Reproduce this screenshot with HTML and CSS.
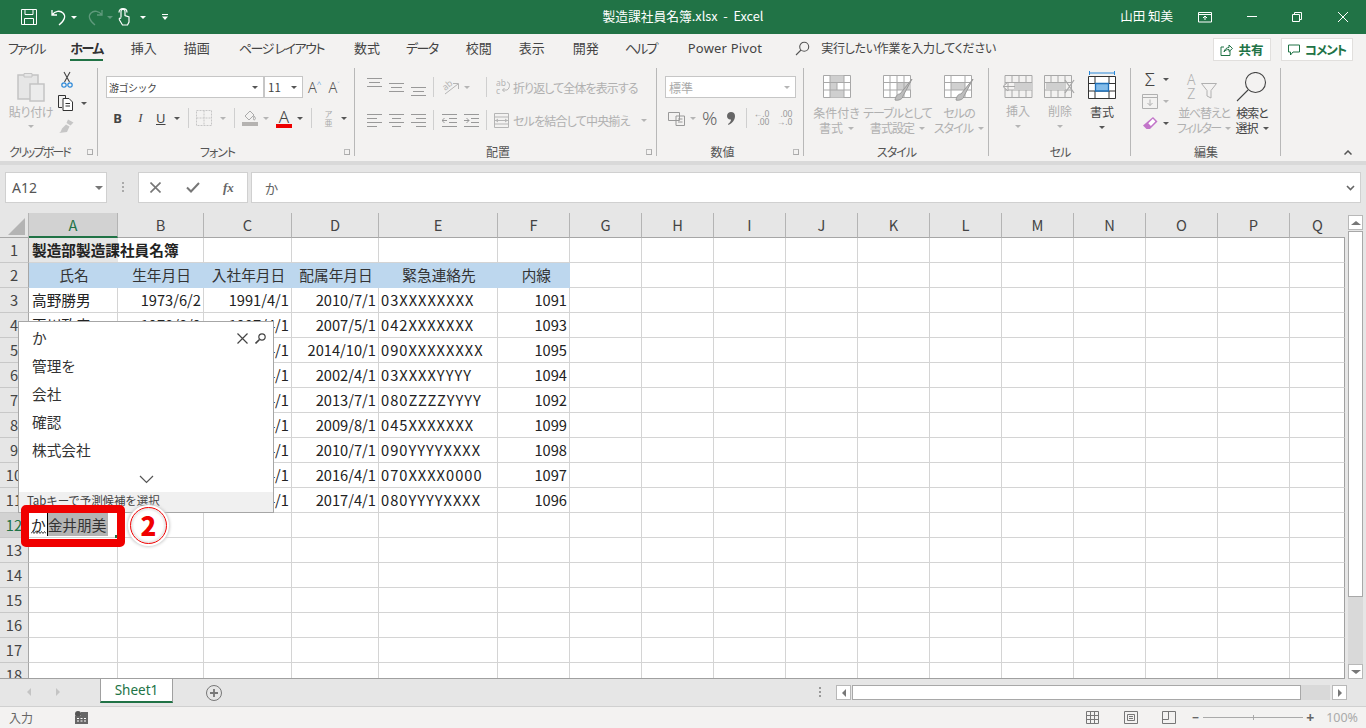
FILE: index.html
```html
<!DOCTYPE html>
<html lang="ja">
<head>
<meta charset="utf-8">
<title>製造課社員名簿.xlsx - Excel</title>
<link rel="stylesheet" href="styles.css">
</head>
<body>
<header class="titlebar">
  <div class="qat">
    <svg class="q-save" width="18" height="18" viewBox="0 0 18 18" fill="none" stroke="#fff"><path d="M1.5 1.5h15v15h-15z M5 1.5v5h8v-5 M4.500 16.500v-6h9v6"/></svg>
    <svg class="q-undo" width="16" height="18" viewBox="0 0 16 18" fill="none" stroke="#fff" stroke-width="1.300"><path d="M1 2v5h5 M1 7c3-4 8-5 11-2s2 7-4 12"/></svg>
    <i class="tri tri-w"></i>
    <svg class="q-redo" width="16" height="18" viewBox="0 0 16 18" fill="none" stroke="#5f9a7c" stroke-width="1.300"><path d="M15 2v5h-5 M15 7c-3-4-8-5-11-2s-2 7 4 12"/></svg>
    <i class="tri tri-g"></i>
    <svg class="q-touch" width="13" height="18" viewBox="0 0 13 18" fill="none" stroke="#fff" stroke-width="1.200"><path d="M3 9.500V3.500a2 2 0 0 1 4 0v4l4 1.500v5l-1.500 3h-5L1.500 12c-.8-1.500.5-2.500 1.500-1.500 M1 4.500C1 2 2.500.7 5 .7s4 1.300 4 3.800"/></svg>
    <i class="tri tri-w"></i>
    <svg class="q-more" width="6" height="6" viewBox="0 0 6 6"><path d="M0 0h6v1H0z M0 2.500h6L3 6z" fill="#fff"/></svg>
  </div>
  <div class="doc-title">製造課社員名簿.xlsx&nbsp; - &nbsp;Excel</div>
  <div class="win">
    <span class="user">山田 知美</span>
    <svg class="w-disp" width="14" height="12" viewBox="0 0 14 12" fill="none" stroke="#fff"><path d="M.5 1.500h13v9.500H.5z M.5 3.500h13 M7 9V5 M5 7l2-2 2 2"/></svg>
    <svg class="w-min" width="10" height="2" viewBox="0 0 10 2"><path d="M0 .5h10" stroke="#fff"/></svg>
    <svg class="w-rest" width="10" height="10" viewBox="0 0 10 10" fill="none" stroke="#fff"><path d="M.5 2.500h7v7h-7z M2.500 2.500v-2h7v7h-2"/></svg>
    <svg class="w-close" width="10" height="10" viewBox="0 0 10 10" stroke="#fff"><path d="M0 0l10 10 M10 0L0 10"/></svg>
  </div>
</header>

<nav class="tabs">
  <span class="tab t-file">ファイル</span>
  <span class="tab tab-on">ホーム</span>
  <span class="tab t-ins">挿入</span>
  <span class="tab">描画</span>
  <span class="tab t-page">ページ レイアウト</span>
  <span class="tab t-num">数式</span>
  <span class="tab t-data">データ</span>
  <span class="tab t-rev">校閲</span>
  <span class="tab">表示</span>
  <span class="tab t-dev">開発</span>
  <span class="tab t-help">ヘルプ</span>
  <span class="tab tab-pp">Power Pivot</span>
  <span class="tell">
    <svg width="15" height="15" viewBox="0 0 15 15" fill="none" stroke="#555" stroke-width="1.100"><circle cx="9.200" cy="5.800" r="4.500"/><path d="M6 9L1 14"/></svg>
    実行したい作業を入力してください
  </span>
  <span class="tab-btns">
    <span class="tbtn tbtn-share"><svg width="13" height="13" viewBox="0 0 13 13" fill="none" stroke="#217346"><path d="M10 7.500v5H1V4h3 M4 9c.5-3 3-4.500 5-4.500V2l3.500 3.500L9 8.500V6.500C7 6.500 5 7 4 9z"/></svg>共有</span>
    <span class="tbtn tbtn-comm"><svg width="12" height="12" viewBox="0 0 12 12" fill="none" stroke="#217346"><path d="M.5 1h11v7H5L2.500 11V8h-2z"/></svg><span class="comm-t">コメント</span></span>
  </span>
</nav>

<section class="ribbon">
  <div class="grp g-clip">
    <div class="grp-body clip-body">
      <div class="big off paste">
        <svg width="29" height="31" viewBox="0 0 29 31" fill="none" stroke="#c4c4c4"><path d="M1 4h20v24H1z" fill="#e6e6e6" stroke-width="1.500"/><path d="M7 2.500h8v3.500H7z" fill="#e6e6e6"/><path d="M13 13h14v17H13z" fill="#ececec" stroke-width="1.500"/></svg>
        <span class="blabel">貼り付け</span>
        <i class="tri tri-l"></i>
      </div>
      <div class="clip-side">
        <svg width="12" height="17" viewBox="0 0 12 17" fill="none"><path d="M3 1l5.500 10 M9 1L3.500 11" stroke="#444" stroke-width="1.100"/><circle cx="3" cy="14" r="2.200" stroke="#2b88d8" stroke-width="1.200"/><circle cx="9" cy="14" r="2.200" stroke="#2b88d8" stroke-width="1.200"/></svg>
        <span class="row-ic"><svg width="19" height="16" viewBox="0 0 19 16" fill="none" stroke="#333"><path d="M4 12.500H.5v-12h7v2.500"/><path d="M5 3.500h6l3.500 3.500v8.500H5z M7.500 8.500h4.500 M7.500 11h4.500" fill="#fff"/></svg><i class="tri tri-d"></i></span>
        <svg width="17" height="16" viewBox="0 0 17 16" fill="#c6c6c6"><path d="M10 1.500l5.500 3-3 3-4-2.500z M8 6.500l3.500 2-2.500 5.500-8 1c2-1 2-2 3-4.500z"/></svg>
      </div>
    </div>
    <div class="grp-label">クリップボード<i class="launch"></i></div>
  </div>

  <div class="grp g-font">
    <div class="grp-body font-body">
      <div class="font-row">
        <span class="combo c-font">游ゴシック<i class="tri tri-d"></i></span>
        <span class="combo c-size">11<i class="tri tri-d"></i></span>
        <span class="ab grow">A<sup>^</sup></span>
        <span class="ab shrink">A<sup>˅</sup></span>
      </div>
      <div class="font-row fr2">
        <b class="fm fm-b">B</b>
        <em class="fm fm-i">I</em>
        <u class="fm fm-u">U</u>
        <i class="tri tri-d t-u"></i>
        <i class="vsep s1"></i>
        <svg class="bd" width="20" height="17" viewBox="0 0 20 17" fill="none" stroke="#c6c6c6" stroke-dasharray="2 1"><path d="M.5.500h15v15H.5z M8 .5v15 M.5 8h15"/></svg>
        <i class="tri tri-l t-bd"></i>
        <i class="vsep s2"></i>
        <span class="fill"><svg width="16" height="12" viewBox="0 0 16 12" fill="none" stroke="#aaa"><path d="M3 6l5-5 4 4-5 5z M12 6c1 1 2 2.500 1 3.500s-2 0-1.500-1z"/></svg><i class="bar bar-g"></i></span>
        <i class="tri tri-l t-fill"></i>
        <span class="fc">A<i class="bar bar-r"></i></span>
        <i class="tri tri-d t-fc"></i>
        <i class="vsep s3"></i>
        <span class="furi">ア<br><span>亜</span></span>
        <i class="tri tri-d t-fu"></i>
      </div>
    </div>
    <div class="grp-label">フォント<i class="launch"></i></div>
  </div>

  <div class="grp g-align">
    <div class="grp-body al-body">
      <div class="al-row">
        <svg class="lines va-t" width="15" height="9" viewBox="0 0 15 9" stroke="#999"><path d="M0 .5h15M2 4.500h11M0 8.500h15"/></svg>
        <svg class="lines va-m" width="15" height="9" viewBox="0 0 15 9" stroke="#999"><path d="M0 .5h15M2 4.500h11M0 8.500h15"/></svg>
        <svg class="lines va-b" width="15" height="9" viewBox="0 0 15 9" stroke="#999"><path d="M0 .5h15M2 4.500h11M0 8.500h15"/></svg>
        <i class="vsep"></i>
        <svg class="orient" width="18" height="18" viewBox="0 0 18 18" fill="none" stroke="#b5b5b5"><text x="1" y="11" font-size="9" fill="#b5b5b5" stroke="none" transform="rotate(-40 5 9)" font-family="Noto Sans">ab</text><path d="M3 16L16 6 M11 5.500h5.500V11"/></svg>
        <i class="tri tri-l t-or"></i>
        <i class="vsep s-wrap"></i>
        <svg width="15" height="16" viewBox="0 0 15 16" fill="none" stroke="#b5b5b5"><text x="0" y="7" font-size="8.500" fill="#b5b5b5" stroke="none" font-family="Noto Sans">ab</text><text x="0" y="15" font-size="8.500" fill="#b5b5b5" stroke="none" font-family="Noto Sans">c</text><path d="M11 3c3 0 3.500 6 0 8H6.500 M8.500 9l-2 2 2 2"/></svg>
        <span class="lbl-off wrap-t">折り返して全体を表示する</span>
      </div>
      <div class="al-row al-r2">
        <svg class="lines" width="15" height="13" viewBox="0 0 15 13" stroke="#999"><path d="M0 .5h15M0 4.500h10M0 8.500h15M0 12.500h10"/></svg>
        <svg class="lines" width="15" height="13" viewBox="0 0 15 13" stroke="#999"><path d="M0 .5h15M3 4.500h9M0 8.500h15M3 12.500h9"/></svg>
        <svg class="lines" width="15" height="13" viewBox="0 0 15 13" stroke="#999"><path d="M0 .5h15M5 4.500h10M0 8.500h15M5 12.500h10"/></svg>
        <i class="vsep"></i>
        <svg class="ind" width="15" height="13" viewBox="0 0 15 13" fill="none" stroke="#999"><path d="M0 .5h15M7 4.500h8M7 8.500h8M0 12.500h15M5 6.500H0M2.500 4L0 6.500 2.500 9"/></svg>
        <svg class="ind i2" width="15" height="13" viewBox="0 0 15 13" fill="none" stroke="#999"><path d="M0 .5h15M7 4.500h8M7 8.500h8M0 12.500h15M0 6.500h5M2.500 4L5 6.500 2.500 9"/></svg>
        <i class="vsep s-merge"></i>
        <svg width="15" height="15" viewBox="0 0 15 15" fill="none" stroke="#b5b5b5"><path d="M.5.500h14v14H.5z M.5 4h14M.5 11h14 M1 7.500h13 M4 6L2 7.500 4 9 M11 6l2 1.500L11 9"/></svg>
        <span class="lbl-off merge-t">セルを結合して中央揃え</span>
        <i class="tri tri-l t-mg"></i>
      </div>
    </div>
    <div class="grp-label">配置<i class="launch"></i></div>
  </div>

  <div class="grp g-num">
    <div class="grp-body num-body">
      <span class="combo c-num">標準<i class="tri tri-l"></i></span>
      <div class="num-row">
        <svg width="17" height="15" viewBox="0 0 17 15" fill="none" stroke="#999"><path d="M.5 1.500h11v8H.5z M8 5h8.500v9.500H8z M10 8h4.500M10 11h4.500" fill="#f3f2f1"/></svg>
        <i class="tri tri-l t-cur"></i>
        <span class="pct">%</span>
        <svg class="comma" width="8" height="13" viewBox="0 0 8 13" fill="#666"><path d="M4 0c2.500 0 4 1.500 4 4 0 4-3 7.500-6.500 9L1 12c2-1.500 3-3 3-4.500-2 .5-4-1-4-3.500C0 1.500 2 0 4 0z"/></svg>
        <i class="vsep"></i>
        <span class="dec">←.0<br>.00</span>
        <span class="dec d2">.00<br>→.0</span>
      </div>
    </div>
    <div class="grp-label">数値<i class="launch"></i></div>
  </div>

  <div class="grp g-style">
    <div class="grp-body st-body">
      <div class="big off b-cond">
        <svg width="28" height="23" viewBox="0 0 28 23" fill="none" stroke="#a8a8a8"><path d="M.5.500h27v22H.500z" fill="#fff"/><path d="M7 .5h14v7.500H7z M7 8h7v7H7z M7 15h14v7.500H7z" fill="#cfcfcf" stroke="none"/><path d="M0 7.500h28M0 15h28M7 0v23M14 8v7M21 0v23"/></svg>
        <span class="blabel">条件付き<br>書式<i class="tri tri-l inl"></i></span>
      </div>
      <div class="big off b-table">
        <svg width="30" height="27" viewBox="0 0 30 27" fill="none" stroke="#a8a8a8"><path d="M.5.500h27v22H.500z" fill="#fff"/><path d="M14 8h14v7H14z" fill="#d0d0d0" stroke="none"/><path d="M0 7.500h28M0 15h28M7 0v23M14 0v23M21 0v23"/><path d="M12 25c1-5 3-6 5-6l12-15-9 17c0 3-5 5-8 4z" fill="#bdbdbd" stroke="#999"/></svg>
        <span class="blabel tight">テーブルとして<br>書式設定<i class="tri tri-l inl"></i></span>
      </div>
      <div class="big off b-cs">
        <svg width="30" height="27" viewBox="0 0 30 27" fill="none" stroke="#a8a8a8"><path d="M.5.500h27v22H.500z" fill="#fff"/><path d="M7 8h14v7H7z" fill="#d0d0d0" stroke="none"/><path d="M0 7.500h28M0 15h28M7 0v23M21 0v23"/><path d="M12 25c1-5 3-6 5-6l12-15-9 17c0 3-5 5-8 4z" fill="#bdbdbd" stroke="#999"/></svg>
        <span class="blabel tight">セルの<br>スタイル<i class="tri tri-l inl"></i></span>
      </div>
    </div>
    <div class="grp-label">スタイル</div>
  </div>

  <div class="grp g-cell">
    <div class="grp-body ce-body">
      <div class="big off b-ins">
        <svg width="32" height="23" viewBox="0 0 32 23" fill="none" stroke="#a8a8a8"><path d="M3 .5h27v22H3z"/><path d="M3 7.500h27M3 15h27M10 0v7M10 15v8M17 0v23M24 0v23"/><path d="M12 8h19v7H12z" fill="#cfcfcf" stroke="none"/><path d="M1 11.500h12M6 7l-5 4.500L6 16z" fill="#f3f2f1"/></svg>
        <span class="blabel">挿入</span>
        <i class="tri tri-l"></i>
      </div>
      <div class="big off b-del">
        <svg width="32" height="23" viewBox="0 0 32 23" fill="none" stroke="#a8a8a8"><path d="M.5.500h27v22H.5z"/><path d="M0 7.500h28M0 15h28M7 0v23M14 0v23M21 0v23"/><path d="M2 8h19v7H2z" fill="#cfcfcf" stroke="none"/><path d="M21 5l9 13M30 5l-9 13" stroke-width="1.300"/></svg>
        <span class="blabel">削除</span>
        <i class="tri tri-l"></i>
      </div>
      <div class="big b-fmt">
        <svg class="fmt-top" width="26" height="4" viewBox="0 0 26 4" stroke="#2b88d8"><path d="M.5 0v4M25.500 0v4M0 2h26"/></svg>
        <svg width="28" height="23" viewBox="0 0 28 23" fill="none" stroke="#333"><path d="M.5.500h27v22H.5z" fill="#fff"/><path d="M0 7.500h28M0 15h28"/><path d="M7 0v7M7 15v8M21 0v7M21 15v8"/><path d="M7.500 7.500h13v7.500h-13z" fill="#83bcea" stroke="#1e6fb8" stroke-width="1.300"/></svg>
        <span class="blabel on">書式</span>
        <i class="tri tri-d"></i>
      </div>
    </div>
    <div class="grp-label">セル</div>
  </div>

  <div class="grp g-edit">
    <div class="grp-body ed-body">
      <div class="ed-col">
        <span class="row-ic"><span class="sigma">Σ</span><i class="tri tri-d"></i></span>
        <span class="row-ic"><svg width="16" height="15" viewBox="0 0 16 15" fill="none" stroke="#b0b0b0"><path d="M.5.500h15v14H.5z M.5 3.500h15 M8 5.500v6 M5.500 9L8 11.500 10.500 9"/></svg><i class="tri tri-l"></i></span>
        <span class="row-ic"><svg width="16" height="16" viewBox="0 0 16 16"><path d="M11 1l4.500 4.500L8 13H4.500L1 9.500z" fill="#c275c9"/><path d="M10.800 2.800l2.600 2.600-4.500 4.500-2.600-2.600z" fill="#fff"/></svg><i class="tri tri-d"></i></span>
      </div>
      <div class="big off b-sort">
        <span class="az">A<br>Z</span>
        <svg class="funnel" width="16" height="16" viewBox="0 0 16 16" fill="none" stroke="#b0b0b0"><path d="M.5.500h15L10 7.500v7.500l-4-2V7.500z"/></svg>
        <span class="blabel tighter">並べ替えと<br><span class="fil">フィルター</span><i class="tri tri-l inl"></i></span>
      </div>
      <div class="big b-find">
        <svg width="32" height="30" viewBox="0 0 32 30" fill="none" stroke="#444" stroke-width="1.100"><circle cx="19.500" cy="10.500" r="10"/><path d="M12 18L1 29"/></svg>
        <span class="blabel on">検索と<br>選択<i class="tri tri-d inl"></i></span>
      </div>
    </div>
    <div class="grp-label">編集</div>
  </div>
  <svg class="collapse" width="8" height="5" viewBox="0 0 8 5" fill="none" stroke="#555" stroke-width="1.500"><path d="M.5 4.500L4 1l3.500 3.500"/></svg>
</section>

<section class="fbar">
  <div class="namebox">A12<i class="tri tri-d"></i></div>
  <svg class="dots" width="2" height="10" viewBox="0 0 2 10" fill="#aaa"><path d="M0 0h2v2H0zM0 4h2v2H0zM0 8h2v2H0z"/></svg>
  <div class="fxbtns">
    <svg width="11" height="11" viewBox="0 0 11 11" stroke="#777" stroke-width="1.600"><path d="M.5.500l10 10M10.500.5l-10 10"/></svg>
    <svg width="14" height="11" viewBox="0 0 14 11" fill="none" stroke="#777" stroke-width="2"><path d="M1 5.500l4 4L13 1"/></svg>
    <span class="fx">fx</span>
  </div>
  <div class="fxinput">か<svg width="9" height="6" viewBox="0 0 9 6" fill="none" stroke="#666" stroke-width="1.600"><path d="M1 1l3.500 3.500L8 1"/></svg></div>
</section>

<section class="sheet">
  <div class="gridwrap">
    <table class="grid">
      <colgroup>
        <col class="c0"><col class="ca"><col class="cb"><col class="cc"><col class="cd"><col class="ce"><col class="cf">
        <col class="cn"><col class="cn"><col class="cn"><col class="cn"><col class="cn"><col class="cn"><col class="cn"><col class="cn"><col class="cn"><col class="cn"><col class="cq">
      </colgroup>
      <thead>
        <tr><th class="corner"><i></i></th><th class="sel">A</th><th>B</th><th>C</th><th>D</th><th>E</th><th>F</th><th>G</th><th>H</th><th>I</th><th>J</th><th>K</th><th>L</th><th>M</th><th>N</th><th>O</th><th>P</th><th>Q</th></tr>
      </thead>
      <tbody>
        <tr><th>1</th><td class="bold">製造部製造課社員名簿</td><td></td><td></td><td></td><td></td><td></td><td></td><td></td><td></td><td></td><td></td><td></td><td></td><td></td><td></td><td></td><td></td></tr>
        <tr class="hd"><th>2</th><td>氏名</td><td>生年月日</td><td>入社年月日</td><td>配属年月日</td><td>緊急連絡先</td><td>内線</td><td class="pl"></td><td class="pl"></td><td class="pl"></td><td class="pl"></td><td class="pl"></td><td class="pl"></td><td class="pl"></td><td class="pl"></td><td class="pl"></td><td class="pl"></td><td class="pl"></td></tr>
        <tr><th>3</th><td>高野勝男</td><td class="r">1973/6/2</td><td class="r">1991/4/1</td><td class="r">2010/7/1</td><td class="tel">03XXXXXXXX</td><td class="r">1091</td><td></td><td></td><td></td><td></td><td></td><td></td><td></td><td></td><td></td><td></td><td></td></tr>
        <tr><th>4</th><td>夏川政彦</td><td class="r">1978/8/9</td><td class="r">1997/4/1</td><td class="r">2007/5/1</td><td class="tel">042XXXXXXX</td><td class="r">1093</td><td></td><td></td><td></td><td></td><td></td><td></td><td></td><td></td><td></td><td></td><td></td></tr>
        <tr><th>5</th><td></td><td></td><td class="r">2000/4/1</td><td class="r">2014/10/1</td><td class="tel">090XXXXXXXX</td><td class="r">1095</td><td></td><td></td><td></td><td></td><td></td><td></td><td></td><td></td><td></td><td></td><td></td></tr>
        <tr><th>6</th><td></td><td></td><td class="r">2000/4/1</td><td class="r">2002/4/1</td><td class="tel">03XXXXYYYY</td><td class="r">1094</td><td></td><td></td><td></td><td></td><td></td><td></td><td></td><td></td><td></td><td></td><td></td></tr>
        <tr><th>7</th><td></td><td></td><td class="r">2000/4/1</td><td class="r">2013/7/1</td><td class="tel">080ZZZZYYYY</td><td class="r">1092</td><td></td><td></td><td></td><td></td><td></td><td></td><td></td><td></td><td></td><td></td><td></td></tr>
        <tr><th>8</th><td></td><td></td><td class="r">2000/4/1</td><td class="r">2009/8/1</td><td class="tel">045XXXXXXX</td><td class="r">1099</td><td></td><td></td><td></td><td></td><td></td><td></td><td></td><td></td><td></td><td></td><td></td></tr>
        <tr><th>9</th><td></td><td></td><td class="r">2000/4/1</td><td class="r">2010/7/1</td><td class="tel">090YYYYXXXX</td><td class="r">1098</td><td></td><td></td><td></td><td></td><td></td><td></td><td></td><td></td><td></td><td></td><td></td></tr>
        <tr><th>10</th><td></td><td></td><td class="r">2000/4/1</td><td class="r">2016/4/1</td><td class="tel">070XXXX0000</td><td class="r">1097</td><td></td><td></td><td></td><td></td><td></td><td></td><td></td><td></td><td></td><td></td><td></td></tr>
        <tr><th>11</th><td></td><td></td><td class="r">2000/4/1</td><td class="r">2017/4/1</td><td class="tel">080YYYYXXXX</td><td class="r">1096</td><td></td><td></td><td></td><td></td><td></td><td></td><td></td><td></td><td></td><td></td><td></td></tr>
        <tr><th class="sel">12</th><td class="edit"><span class="ime">か</span><span class="caret"></span><span class="pick">金井朋美</span><svg class="wave" width="15" height="3" viewBox="0 0 15 3" fill="none" stroke="#444"><path d="M0 2.500l1.500-2 1.500 2 1.500-2 1.500 2 1.500-2 1.500 2 1.500-2 1.500 2 1.500-2 1.500 2"/></svg><i class="handle"></i></td><td></td><td></td><td></td><td></td><td></td><td></td><td></td><td></td><td></td><td></td><td></td><td></td><td></td><td></td><td></td><td></td></tr>
        <tr><th>13</th><td></td><td></td><td></td><td></td><td></td><td></td><td></td><td></td><td></td><td></td><td></td><td></td><td></td><td></td><td></td><td></td><td></td></tr>
        <tr><th>14</th><td></td><td></td><td></td><td></td><td></td><td></td><td></td><td></td><td></td><td></td><td></td><td></td><td></td><td></td><td></td><td></td><td></td></tr>
        <tr><th>15</th><td></td><td></td><td></td><td></td><td></td><td></td><td></td><td></td><td></td><td></td><td></td><td></td><td></td><td></td><td></td><td></td><td></td></tr>
        <tr><th>16</th><td></td><td></td><td></td><td></td><td></td><td></td><td></td><td></td><td></td><td></td><td></td><td></td><td></td><td></td><td></td><td></td><td></td></tr>
        <tr><th>17</th><td></td><td></td><td></td><td></td><td></td><td></td><td></td><td></td><td></td><td></td><td></td><td></td><td></td><td></td><td></td><td></td><td></td></tr>
        <tr><th>18</th><td></td><td></td><td></td><td></td><td></td><td></td><td></td><td></td><td></td><td></td><td></td><td></td><td></td><td></td><td></td><td></td><td></td></tr>
      </tbody>
    </table>

    <div class="suggest">
      <div class="sg-list">
        <div class="sg-first">か<span class="sg-tools"><svg width="11" height="11" viewBox="0 0 11 11" stroke="#444" stroke-width="1.200"><path d="M.5.500l10 10M10.500.5l-10 10"/></svg><svg width="11" height="11" viewBox="0 0 11 11" fill="none" stroke="#444" stroke-width="1.200"><circle cx="7" cy="4" r="3.200"/><path d="M4.500 6.500L.5 10.500" stroke-width="1.600"/></svg></span></div>
        <div>管理を</div>
        <div>会社</div>
        <div>確認</div>
        <div>株式会社</div>
      </div>
      <svg class="sg-more" width="15" height="9" viewBox="0 0 15 9" fill="none" stroke="#555" stroke-width="1.200"><path d="M1 1l6.500 6.500L14 1"/></svg>
      <div class="sg-foot">Tabキーで予測候補を選択</div>
    </div>
    <div class="callout"></div>
    <div class="badge"><span>2</span></div>
  </div>
  <div class="vscroll">
    <span class="sbtn"><i class="tri-up"></i></span>
    <span class="vthumb"></span>
    <span class="vtrack"></span>
    <span class="sbtn"><i class="tri tri-s"></i></span>
  </div>
</section>

<section class="sheetbar">
  <span class="nav"><i class="nav-l"></i><i class="nav-r"></i></span>
  <span class="sheettab">Sheet1</span>
  <svg class="addsheet" width="16" height="16" viewBox="0 0 16 16" fill="none" stroke="#777"><circle cx="8" cy="8" r="7.500"/><path d="M8 4v8M4 8h8" stroke-width="1.800"/></svg>
  <svg class="sbdots" width="2" height="10" viewBox="0 0 2 10" fill="#999"><path d="M0 0h2v2H0zM0 4h2v2H0zM0 8h2v2H0z"/></svg>
  <span class="hscroll">
    <span class="sbtn"><i class="nav-l dk"></i></span>
    <span class="hthumb"></span>
    <span class="htrack"></span>
    <span class="sbtn"><i class="nav-r dk"></i></span>
  </span>
</section>

<footer class="status">
  <span class="st-mode">入力</span>
  <svg class="st-macro" width="13" height="13" viewBox="0 0 13 13"><circle cx="3" cy="3" r="3" fill="#555"/><path d="M0 5h13v8H0z M6 1h7v4H6z" fill="#666"/><path d="M2 7h2v1H2zM5.500 7h2v1h-2zM9 7h2v1H9zM2 9.500h2v1H2zM5.500 9.500h2v1h-2zM9 9.500h2v1H9z" fill="#fff"/></svg>
  <span class="st-right">
    <svg width="13" height="13" viewBox="0 0 13 13" fill="none" stroke="#777"><path d="M.5.500h12v12H.5zM4.500 0v13M8.500 0v13M0 4.500h13M0 8.500h13"/></svg>
    <svg class="v2" width="14" height="13" viewBox="0 0 14 13" fill="none" stroke="#777"><path d="M.5.500h13v12H.5zM3.500 3.500h7v6h-7zM5 5.500h4M5 7.500h4"/></svg>
    <svg class="v3" width="14" height="13" viewBox="0 0 14 13" fill="none" stroke="#777"><path d="M.5.500h13v12H.5zM.5 8.500h6V.5"/></svg>
    <span class="zm">−</span>
    <span class="slider"><i></i></span>
    <span class="zp">+</span>
    <span class="zv">100%</span>
  </span>
</footer>
</body>
</html>
```
FILE: styles.css
```css
* { box-sizing: border-box; }
html, body { margin: 0; padding: 0; }
body {
  width: 1366px; height: 728px; overflow: hidden; background: #e6e6e6;
  display: flex; flex-direction: column;
  font-family: "Noto Sans CJK JP", "Noto Sans", sans-serif; color: #444;
  font-feature-settings: "palt";
}
i { font-style: normal; display: block; }
svg { display: block; flex: none; }

.tri { width: 0; height: 0; border: 3px solid transparent; border-bottom-width: 0; border-top-width: 3px; flex: none; }
.tri-w { border-top-color: #fff; }
.tri-g { border-top-color: #5f9a7c; }
.tri-d { border-top-color: #555; }
.tri-l { border-top-color: #b5b5b5; }
.tri-s { border-top-color: #777; border-width: 4px 5px 0; }
.tri-up { width: 0; height: 0; border: solid transparent; border-width: 0 5px 4px; border-bottom-color: #777; }
.inl { display: inline-block; margin: 0 0 2px 5px; vertical-align: middle; }

/* title bar */
.titlebar { height: 34px; background: #217346; color: #fff; display: grid; grid-template-columns: 1fr auto 1fr; align-items: center; flex: none; }
.qat { display: flex; align-items: center; padding-left: 20px; }
.q-undo { margin-left: 13px; }
.q-undo + .tri { margin-left: 4px; }
.q-redo { margin-left: 10px; }
.q-redo + .tri { margin-left: 4px; }
.q-touch { margin-left: 5px; }
.q-touch + .tri { margin-left: 9px; }
.q-more { margin-left: 16px; }
.doc-title { font-size: 12.75px; font-feature-settings: normal; line-height: 30px; padding-bottom: 3px; }
.win { display: flex; align-items: center; justify-content: flex-end; padding-right: 18px; }
.user { font-size: 12.5px; margin-right: 25px; line-height: 30px; padding-bottom: 2px; }
.w-min { margin-left: 35px; }
.w-rest { margin-left: 35px; }
.w-close { margin-left: 36px; }

/* tabs */
.tabs { height: 32px; background: #f3f2f1; display: flex; align-items: flex-start; padding-left: 8px; gap: 27px; font-size: 13px; flex: none; }
.tab { line-height: 28px; height: 27px; white-space: nowrap; color: #444; }
.t-file { letter-spacing: -2.2px; margin-right: -1px; }
.tab-on { font-weight: 700; color: #333; border-bottom: 2.5px solid #217346; letter-spacing: -1.5px; }
.t-ins { margin-left: 1px; }
.t-page { letter-spacing: -1.45px; margin-left: 2px; }
.t-num { margin-left: 3px; }
.t-data { letter-spacing: -1.5px; margin-left: -1px; }
.t-rev { margin-left: 1px; }
.t-dev { margin-left: 1px; }
.t-help { letter-spacing: -1.8px; margin-left: -1px; }
.tab-pp { font-feature-settings: normal; font-family: "Noto Sans", sans-serif; margin-left: 4px; letter-spacing: .2px; }
.tell { display: flex; align-items: center; gap: 11px; line-height: 28px; margin-left: 6px; height: 28px; color: #444; font-size: 12px; letter-spacing: -.25px; }
.tab-btns { margin-left: auto; display: flex; gap: 10px; padding: 4px 13px 0 0; }
.tbtn { height: 23px; background: #fff; border: 1px solid #e1dfdd; color: #217346; font-weight: 700; font-size: 12.5px; display: flex; align-items: center; justify-content: center; gap: 5px; }
.tbtn-share { width: 58px; }
.tbtn-comm { width: 72px; }
.comm-t { letter-spacing: -1px; }

/* ribbon */
.ribbon { height: 95px; background: #f3f2f1; display: flex; flex: none; box-shadow: 0 4px 0 #d9d9d9; position: relative; }
.grp { display: flex; flex-direction: column; position: relative; }
.grp::after { content: ""; position: absolute; right: 0; top: 2px; bottom: 5px; width: 1px; background: #b8b8b8; }
.grp-body { flex: 1; position: relative; min-height: 0; }
.grp-label { height: 18px; line-height: 17px; font-size: 12px; text-align: center; color: #555; position: relative; flex: none; }
.launch { position: absolute; right: 5px; top: 6px; width: 6px; height: 6px; border: 1px solid #aaa; border-top-color: #bbb; border-left-color: #bbb; }
.g-clip { width: 98px; }
.g-clip .grp-label { padding-right: 19px; letter-spacing: -1.9px; }
.g-font { width: 257px; }
.g-font .grp-label { padding-right: 18px; letter-spacing: -1px; }
.g-align { width: 302px; }
.g-align .grp-label { padding-right: 16px; }
.g-num { width: 147px; }
.g-num .grp-label { padding-right: 16px; }
.g-style { width: 185px; }
.g-style .grp-label { letter-spacing: -1px; }
.g-cell { width: 142px; }
.g-cell .grp-label { letter-spacing: -1px; }
.g-edit { width: 150px; }
.collapse { position: absolute; right: 14px; bottom: 6px; }

.big { display: flex; flex-direction: column; align-items: center; text-align: center; }
.blabel { font-size: 12px; line-height: 15px; color: #b0b0b0; white-space: nowrap; }
.blabel.on { color: #444; }
.tight { letter-spacing: -.9px; }
.tighter { letter-spacing: -1.2px; }
.fil { letter-spacing: -1.8px; }

.clip-body { display: flex; padding-left: 10px; }
.paste { width: 42px; padding-top: 5px; letter-spacing: -.3px; }
.paste .blabel { margin-top: 2px; }
.paste .tri { margin-top: 6px; }
.clip-side { display: flex; flex-direction: column; gap: 7px; padding: 5px 0 0 6px; align-items: flex-start; }
.clip-side > svg:first-child { margin-left: 3px; }
.row-ic { display: flex; align-items: center; gap: 4px; }

.font-body { padding: 10px 0 0 8px; }
.font-row { display: flex; align-items: center; }
.combo { height: 22px; background: #fff; border: 1px solid #c6c6c6; font-size: 11px; display: flex; align-items: center; justify-content: space-between; padding: 0 5px 0 2px; color: #444; }
.c-font { width: 158px; font-feature-settings: normal; font-size: 10px; letter-spacing: -.5px; }
.c-size { width: 39px; font-size: 11.5px; padding-left: 3px; }
.ab { font-size: 14.5px; color: #555; font-family: "Noto Sans", sans-serif; line-height: 16px; font-weight: 300; }
.ab sup { font-size: 8px; color: #2b88d8; line-height: 0; vertical-align: 6px; }
.grow { margin-left: 5px; }
.shrink { margin-left: 7px; }
.fr2 { margin-top: 10px; height: 20px; padding-left: 7px; }
.fm { font-family: "Liberation Serif", serif; font-size: 13px; color: #444; width: 9px; text-align: center; }
.fm-b { font-family: "Noto Sans", sans-serif; font-weight: 700; }
.fm-i { margin-left: 14px; }
.fm-u { margin-left: 11px; font-family: "Noto Sans", sans-serif; }
.t-u { margin-left: 9px; }
.vsep { width: 1px; height: 20px; background: #cfcfcf; flex: none; }
.s1 { margin-left: 8px; }
.bd { margin-left: 7px; }
.t-bd { margin-left: 4px; }
.s2 { margin-left: 8px; }
.fill { margin-left: 7px; display: flex; flex-direction: column; width: 16px; }
.bar { height: 4px; width: 16px; flex: none; }
.bar-g { background: #b5b3b1; }
.bar-r { background: #e00; }
.t-fill { margin-left: 5px; }
.fc { margin-left: 7px; width: 16px; font-family: "Noto Sans", sans-serif; font-size: 17px; line-height: 15px; text-align: center; color: #444; display: flex; flex-direction: column; font-weight: 300; }
.t-fc { margin-left: 5px; }
.s3 { margin-left: 8px; }
.furi { margin-left: 11px; width: 11px; font-size: 8px; line-height: 9px; color: #aaa; text-align: center; }
.t-fu { margin-left: 7px; }

.al-body { padding: 12px 0 0 12px; }
.al-row { display: flex; align-items: center; height: 18px; }
.al-r2 { margin-top: 15px; }
.lines { margin-right: 7px; }
.va-t { align-self: flex-start; }
.va-m { align-self: center; }
.va-b { align-self: flex-end; }
.al-row .vsep { margin-right: 8px; }
.orient { margin-right: 4px; }
.t-or { margin-right: 16px; }
.s-wrap { margin-right: 9px !important; }
.wrap-t, .merge-t { font-size: 12px; color: #b0b0b0; white-space: nowrap; }
.wrap-t { margin-left: 2px; letter-spacing: -.9px; }
.merge-t { margin-left: 4px; letter-spacing: -.8px; }
.ind { margin-right: 7px; }
.s-merge { margin-right: 7px !important; }
.t-mg { margin-left: 11px; }

.num-body { padding: 10px 0 0 8px; }
.c-num { width: 131px; color: #aaa; font-size: 12px; padding-left: 3px; }
.num-row { display: flex; align-items: center; margin-top: 10px; height: 20px; padding-left: 3px; }
.t-cur { margin-left: 5px; }
.pct { font-size: 19px; color: #666; font-family: "Noto Sans", sans-serif; font-weight: 300; margin-left: 6px; line-height: 20px; }
.comma { margin-left: 10px; }
.num-row .vsep { margin-left: 11px; }
.dec { font-size: 8.5px; line-height: 8px; color: #999; margin-left: 6px; width: 16px; text-align: right; font-family: "Noto Sans", sans-serif; }
.d2 { margin-left: 7px; }

.st-body { display: flex; padding: 9px 0 0 10px; }
.st-body svg { height: 27px; }
.st-body .blabel { margin-top: 3px; }
.b-cond { width: 45px; }
.b-table { width: 69px; margin-left: 4px; }
.b-cs { width: 48px; margin-left: 3px; }
.b-cond svg { height: 23px; margin-bottom: 4px; }

.ce-body { display: flex; padding: 9px 0 0 11px; }
.b-ins { width: 36px; margin-right: 6px; }
.b-del { width: 36px; margin-right: 6px; }
.b-fmt { width: 36px; margin-top: -4px; }
.ce-body .blabel { margin-top: 5px; }
.ce-body .tri { margin-top: 7px; }
.fmt-top { margin-bottom: 1px; }

.ed-body { display: flex; padding: 6px 0 0 11px; }
.ed-col { display: flex; flex-direction: column; gap: 7px; width: 34px; }
.sigma { width: 16px; font-size: 18px; line-height: 15px; color: #444; text-align: center; font-family: "Noto Sans", sans-serif; font-weight: 300; }
.ed-col .row-ic { height: 15px; gap: 5px; }
.b-sort { width: 54px; position: relative; margin-left: 1px; padding-top: 31px; }
.az { position: absolute; left: 10px; top: 1px; font-size: 14px; line-height: 14px; color: #b0b0b0; font-family: "Noto Sans", sans-serif; font-weight: 300; }
.funnel { position: absolute; left: 24px; top: 11px; }
.b-sort .blabel { margin-top: 2px; }
.b-find { width: 36px; margin-left: 3px; letter-spacing: -1px; }
.b-find .blabel { margin-top: 3px; }

/* formula bar */
.fbar { height: 52px; flex: none; padding: 11px 5px 0 5px; display: flex; align-items: flex-start; }
.namebox { width: 102px; height: 31px; background: #fff; border: 1px solid #d0d0d0; font-size: 14px; display: flex; align-items: center; justify-content: space-between; padding: 0 3px 0 6px; color: #555; font-family: "Noto Sans", sans-serif; }
.namebox .tri { border-width: 4px 4px 0; border-top-color: #777; }
.dots { margin: 10px 0 0 15px; }
.fxbtns { width: 110px; height: 31px; margin-left: 14px; background: #fff; border: 1px solid #d0d0d0; display: flex; align-items: center; padding-left: 11px; }
.fxbtns svg + svg { margin-left: 25px; }
.fx { font-family: "Liberation Serif", serif; font-style: italic; font-weight: 700; font-size: 13px; color: #666; margin-left: 23px; }
.fxinput { flex: 1; height: 31px; margin-left: 3px; background: #fff; border: 1px solid #d0d0d0; font-size: 13.5px; display: flex; align-items: center; justify-content: space-between; padding: 0 5px 0 13px; color: #666; }

/* sheet */
.sheet { flex: 1; min-height: 0; display: flex; position: relative; font-feature-settings: normal; }
.gridwrap { width: 1345px; height: 466px; overflow: hidden; position: relative; border-bottom: 1px solid #a0a0a0; flex: none; }
.grid { border-collapse: separate; border-spacing: 0; table-layout: fixed; width: 1345px; font-size: 14.67px; }
.c0 { width: 29px; } .ca { width: 89px; } .cb { width: 86px; } .cc { width: 88px; } .cd { width: 87px; } .ce { width: 119px; } .cf { width: 72px; } .cn { width: 72px; } .cq { width: 55px; }
.grid th { font-weight: 400; background: #e6e6e6; color: #444; padding: 0; font-family: "Noto Sans CJK JP", sans-serif; }
.grid thead th { height: 25px; line-height: 22px; border-right: 1px solid #b4b4b4; border-bottom: 1px solid #a6a6a6; }
.grid thead th:last-child { border-right: 0; }
.grid thead th.sel { background: #d2d2d2; color: #217346; border-bottom: 2px solid #217346; border-right-color: #b4b4b4; }
.corner { position: relative; }
.corner i { position: absolute; right: 3px; bottom: 2px; width: 17px; height: 17px; background: #b4b4b4; clip-path: polygon(100% 0, 100% 100%, 0 100%); }
.grid tbody th { height: 25px; line-height: 22px; border-right: 1px solid #a6a6a6; border-bottom: 1px solid #c8c8c8; }
.grid tbody th.sel { background: #d2d2d2; color: #217346; }
.grid td { height: 25px; line-height: 22px; border-right: 1px solid #d4d4d4; border-bottom: 1px solid #d4d4d4; padding: 0 2px 0 3px; white-space: nowrap; overflow: hidden; color: #222; background: #fff; }
.grid td:last-child { border-right: 1px solid #a0a0a0; }
.grid td.r { text-align: right; }
.grid td.tel { letter-spacing: 1px; padding-left: 2px; }
.grid td.bold { font-weight: 700; overflow: visible; border-right: 0; position: relative; z-index: 1; background: transparent; }
.grid tr.hd td { background: #bdd7ee; border-right: 0; border-bottom: 1px solid #bdd7ee; text-align: center; color: #333; }
.grid tr.hd td:nth-child(7) { text-align: right; padding-right: 19px; }
.grid tr.hd td.pl { background: #fff; border-right: 1px solid #d4d4d4; border-bottom: 1px solid #d4d4d4; }
.grid tr.hd td:last-child { border-right: 1px solid #a0a0a0; }

.grid td.edit { padding: 0 0 0 2px; position: relative; overflow: visible; line-height: 23px; vertical-align: top; }
.caret { display: inline-block; width: 1px; height: 23px; background: #000; vertical-align: top; margin-left: 1px; }
.pick { display: inline-block; background: #b4b4b4; height: 23px; color: #333; vertical-align: top; width: 60px; }
.wave { position: absolute; left: 2px; top: 18px; }
.handle { position: absolute; right: -1px; bottom: -1px; width: 3px; height: 3px; background: #217346; }

.suggest { position: absolute; left: 18px; top: 108px; width: 256px; height: 192px; background: #fff; border: 1px solid #a6a6a6; display: flex; flex-direction: column; z-index: 2; color: #333; }
.sg-list { font-size: 14.67px; line-height: 28px; padding: 2px 0 0 13px; }
.sg-first { display: flex; justify-content: space-between; padding-right: 7px; align-items: center; }
.sg-tools { display: flex; gap: 7px; }
.sg-more { margin: 11px 0 0 120px; }
.sg-foot { margin-top: auto; height: 20px; background: #f0f0f0; font-size: 11.5px; line-height: 17px; padding-left: 8px; color: #444; letter-spacing: -.1px; }

.callout { position: absolute; left: 21px; top: 292px; width: 104px; height: 42px; border: 8px solid #f00000; border-radius: 5px; z-index: 3; }
.badge { position: absolute; left: 130px; top: 294px; width: 37px; height: 37px; border-radius: 50%; background: #fff; border: 1.5px solid #f00000; box-shadow: 0 0 0 2px #fff, 0 0 3px 3px #ccc, inset 0 0 2px 2px #e8e8e8; z-index: 3; display: flex; align-items: center; justify-content: center; color: #f00000; font-weight: 900; font-size: 26px; line-height: 1; font-family: "Noto Sans CJK JP", sans-serif; }
.badge span { margin-top: -2px; }

.vscroll { flex: 1; padding: 2px 4px 0 3px; display: flex; flex-direction: column; height: 466px; }
.sbtn { height: 15px; width: 15px; background: #fff; border: 1px solid #b8b8b8; display: flex; align-items: center; justify-content: center; flex: none; }
.vthumb { height: 366px; background: #fff; border: 1px solid #a8a8a8; flex: none; margin-top: 1px; }
.vtrack { flex: 1; background: #d9d9d9; }

/* sheet tabs */
.sheetbar { height: 27px; flex: none; display: flex; align-items: flex-start; position: relative; font-feature-settings: normal; }
.nav { display: flex; gap: 25px; width: 100px; padding: 9px 0 0 27px; }
.nav-l { width: 0; height: 0; border: solid transparent; border-width: 4px 4px 4px 0; border-right-color: #c4c4c4; }
.nav-r { width: 0; height: 0; border: solid transparent; border-width: 4px 0 4px 4px; border-left-color: #c4c4c4; }
.nav-l.dk { border-right-color: #777; }
.nav-r.dk { border-left-color: #777; }
.sheettab { width: 73px; height: 24px; background: #fff; border: 1px solid #a0a0a0; border-top: 0; border-bottom: 2px solid #217346; font-size: 13.5px; text-align: center; line-height: 23px; color: #217346; font-family: "Noto Sans", sans-serif; }
.addsheet { margin: 6px 0 0 33px; }
.sbdots { margin: 8px 0 0 597px; }
.hscroll { margin: 6px 0 0 15px; display: flex; width: 511px; height: 15px; }
.hthumb { width: 449px; height: 15px; background: #fff; border: 1px solid #a8a8a8; margin-left: 1px; }
.htrack { flex: 1; background: #d9d9d9; margin-right: 2px; }

/* status */
.status { height: 22px; flex: none; background: #f3f2f1; border-top: 1px solid #d0d0d0; display: flex; align-items: center; padding-left: 9px; font-size: 12px; color: #666; }
.st-macro { margin-left: 42px; }
.st-right { margin-left: auto; display: flex; align-items: center; padding-right: 8px; }
.v2 { margin-left: 25px; }
.v3 { margin-left: 24px; }
.zm { margin-left: 16px; font-weight: 700; color: #666; width: 8px; font-family: "Noto Sans", sans-serif; }
.slider { width: 100px; height: 1px; background: #aaa; margin-left: 3px; position: relative; }
.slider i { position: absolute; left: 50px; top: -2px; width: 1px; height: 5px; background: #aaa; }
.zp { margin-left: 3px; font-weight: 700; color: #666; width: 9px; font-family: "Noto Sans", sans-serif; font-size: 14px; }
.zv { margin-left: 11px; color: #aaa; font-size: 12.5px; font-family: "Noto Sans", sans-serif; }
```
